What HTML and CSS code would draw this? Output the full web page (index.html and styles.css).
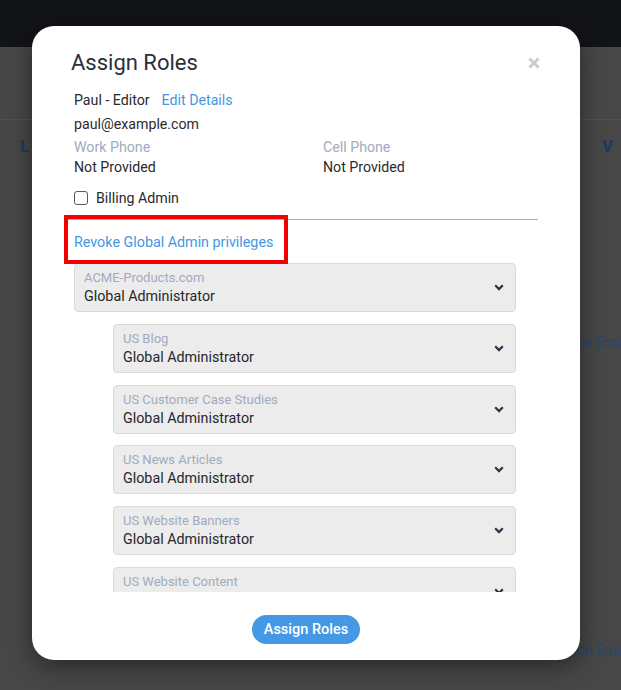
FILE: index.html
```html
<!DOCTYPE html>
<html lang="en">
<head>
<meta charset="utf-8">
<title>Assign Roles</title>
<link rel="stylesheet" href="styles.css">
</head>
<body>
<div class="page">
  <div class="topbar"></div>
  <div class="subbar"></div>
  <div class="thead"><span class="th-l">L</span><span class="th-r">V</span></div>
  <div class="trow first"><span class="cell">Notification Email</span></div>
  <div class="trow second"><span class="cell">Notification Email</span></div>
</div>

<div class="modal">
  <div class="m-head">
    <h1 class="m-title">Assign Roles</h1>
    <svg class="close" width="12" height="12" viewBox="0 0 12 12"><path d="M1.5 1.5 L10.5 10.5 M10.5 1.5 L1.5 10.5" stroke="#cbcbcb" stroke-width="3" stroke-linecap="butt"/></svg>
  </div>
  <div class="m-body">
    <div class="info">
      <div class="row-line"><span>Paul - Editor</span><a class="link edit">Edit Details</a></div>
      <div class="row-line">paul@example.com</div>
      <div class="phones">
        <div><div class="lbl">Work Phone</div><div class="val">Not Provided</div></div>
        <div><div class="lbl">Cell Phone</div><div class="val">Not Provided</div></div>
      </div>
      <label class="check"><span class="box"></span><span>Billing Admin</span></label>
    </div>
    <div class="divider"></div>
    <div class="scroll">
      <a class="link revoke">Revoke Global Admin privileges</a>
      <div class="selects">
        <div class="sel">
          <div class="sel-text"><div class="sel-lbl">ACME-Products.com</div><div class="sel-val">Global Administrator</div></div>
          <svg class="chev" width="10" height="7" viewBox="0 0 10 7"><path d="M1.2 1.3 L5 5.1 L8.8 1.3" fill="none" stroke="#2d3446" stroke-width="2.2"/></svg>
        </div>
        <div class="sel sub">
          <div class="sel-text"><div class="sel-lbl">US Blog</div><div class="sel-val">Global Administrator</div></div>
          <svg class="chev" width="10" height="7" viewBox="0 0 10 7"><path d="M1.2 1.3 L5 5.1 L8.8 1.3" fill="none" stroke="#2d3446" stroke-width="2.2"/></svg>
        </div>
        <div class="sel sub">
          <div class="sel-text"><div class="sel-lbl">US Customer Case Studies</div><div class="sel-val">Global Administrator</div></div>
          <svg class="chev" width="10" height="7" viewBox="0 0 10 7"><path d="M1.2 1.3 L5 5.1 L8.8 1.3" fill="none" stroke="#2d3446" stroke-width="2.2"/></svg>
        </div>
        <div class="sel sub">
          <div class="sel-text"><div class="sel-lbl">US News Articles</div><div class="sel-val">Global Administrator</div></div>
          <svg class="chev" width="10" height="7" viewBox="0 0 10 7"><path d="M1.2 1.3 L5 5.1 L8.8 1.3" fill="none" stroke="#2d3446" stroke-width="2.2"/></svg>
        </div>
        <div class="sel sub">
          <div class="sel-text"><div class="sel-lbl">US Website Banners</div><div class="sel-val">Global Administrator</div></div>
          <svg class="chev" width="10" height="7" viewBox="0 0 10 7"><path d="M1.2 1.3 L5 5.1 L8.8 1.3" fill="none" stroke="#2d3446" stroke-width="2.2"/></svg>
        </div>
        <div class="sel sub">
          <div class="sel-text"><div class="sel-lbl">US Website Content</div><div class="sel-val">Global Administrator</div></div>
          <svg class="chev" width="10" height="7" viewBox="0 0 10 7"><path d="M1.2 1.3 L5 5.1 L8.8 1.3" fill="none" stroke="#2d3446" stroke-width="2.2"/></svg>
        </div>
      </div>
    </div>
  </div>
  <div class="m-foot"><button class="btn">Assign Roles</button></div>
  <div class="highlight"></div>
</div>
</body>
</html>
```

FILE: styles.css
```css
* { box-sizing: border-box; }
html, body {
  margin: 0;
  padding: 0;
  width: 621px;
  height: 690px;
  overflow: hidden;
}
body {
  background: #474747;
  font-family: Roboto, "Liberation Sans", sans-serif;
  position: relative;
}

/* dimmed page behind the dialog */
.page { width: 621px; }
.topbar { height: 47px; background: #131418; }
.subbar { height: 73px; border-bottom: 1px solid #525252; }
.thead {
  display: flex;
  justify-content: space-between;
  padding: 16px 8px 0 20px;
  height: 40px;
  font-size: 17px;
  font-weight: 700;
  color: #1d3a5c;
}
.trow {
  display: flex;
  padding-left: 520px;
  font-size: 14px;
  color: #27466d;
  white-space: nowrap;
}
.trow.first { margin-top: 174px; }
.trow.second { margin-top: 292px; }

/* dialog */
.modal {
  position: absolute;
  left: 32px;
  top: 26px;
  width: 548px;
  height: 634px;
  background: #fff;
  border-radius: 22px;
  box-shadow: 0 6px 24px rgba(0, 0, 0, 0.45);
  display: flex;
  flex-direction: column;
}
.m-head {
  display: flex;
  justify-content: space-between;
  align-items: center;
  padding: 24px 40px 0 39px;
}
.m-title {
  margin: 0;
  font-size: 22px;
  line-height: 26px;
  font-weight: 400;
  color: #2b2f3b;
}
.close { display: block; }

.m-body { padding: 12px 42px 0 32px; }
.info {
  padding-left: 10px;
  font-size: 14.2px;
  color: #2a2a2e;
}
.row-line { line-height: 24px; display: flex; gap: 12px; }
.link { color: #4298e3; text-decoration: none; cursor: pointer; }
.phones {
  display: grid;
  grid-template-columns: 249px 1fr;
  margin-top: 1px;
}
.lbl { color: #a0abbf; line-height: 20px; }
.val { line-height: 20px; }
.check {
  display: flex;
  align-items: center;
  gap: 8px;
  margin-top: 10px;
  height: 22px;
}
.box {
  width: 14px;
  height: 14px;
  border: 1px solid #5a5a5a;
  border-radius: 3px;
}
.divider {
  margin-top: 10px;
  border-top: 1px solid #a5b2c7;
}
.scroll {
  height: 372px;
  overflow: hidden;
  padding: 12px 22px 0 10px;
}
.revoke {
  display: block;
  font-size: 14.3px;
  line-height: 20px;
}
.selects {
  margin-top: 11px;
  display: flex;
  flex-direction: column;
  gap: 11.8px;
}
.sel {
  height: 49px;
  flex-shrink: 0;
  background: #ececec;
  border: 1px solid #dadada;
  border-radius: 4px;
  padding: 5px 11px 5px 9px;
  display: flex;
  align-items: center;
  justify-content: space-between;
}
.sel-text { align-self: flex-start; }
.sel.sub { margin-left: 39px; }
.sel-lbl {
  font-size: 13px;
  line-height: 17px;
  color: #a0abbf;
}
.sel-val {
  font-size: 14.3px;
  line-height: 21px;
  color: #26272b;
}
.chev { display: block; }

.m-foot {
  display: flex;
  justify-content: center;
  padding-top: 23px;
}
.btn {
  height: 29px;
  width: 108px;
  border: none;
  border-radius: 15px;
  background: #4499e6;
  color: #fff;
  font-family: Roboto, "Liberation Sans", sans-serif;
  font-size: 14.5px;
  font-weight: 500;
  padding: 0;
}

/* red annotation box */
.highlight {
  position: absolute;
  left: 32px;
  top: 189px;
  width: 224px;
  height: 49px;
  border: 4px solid #f40000;
}
```
